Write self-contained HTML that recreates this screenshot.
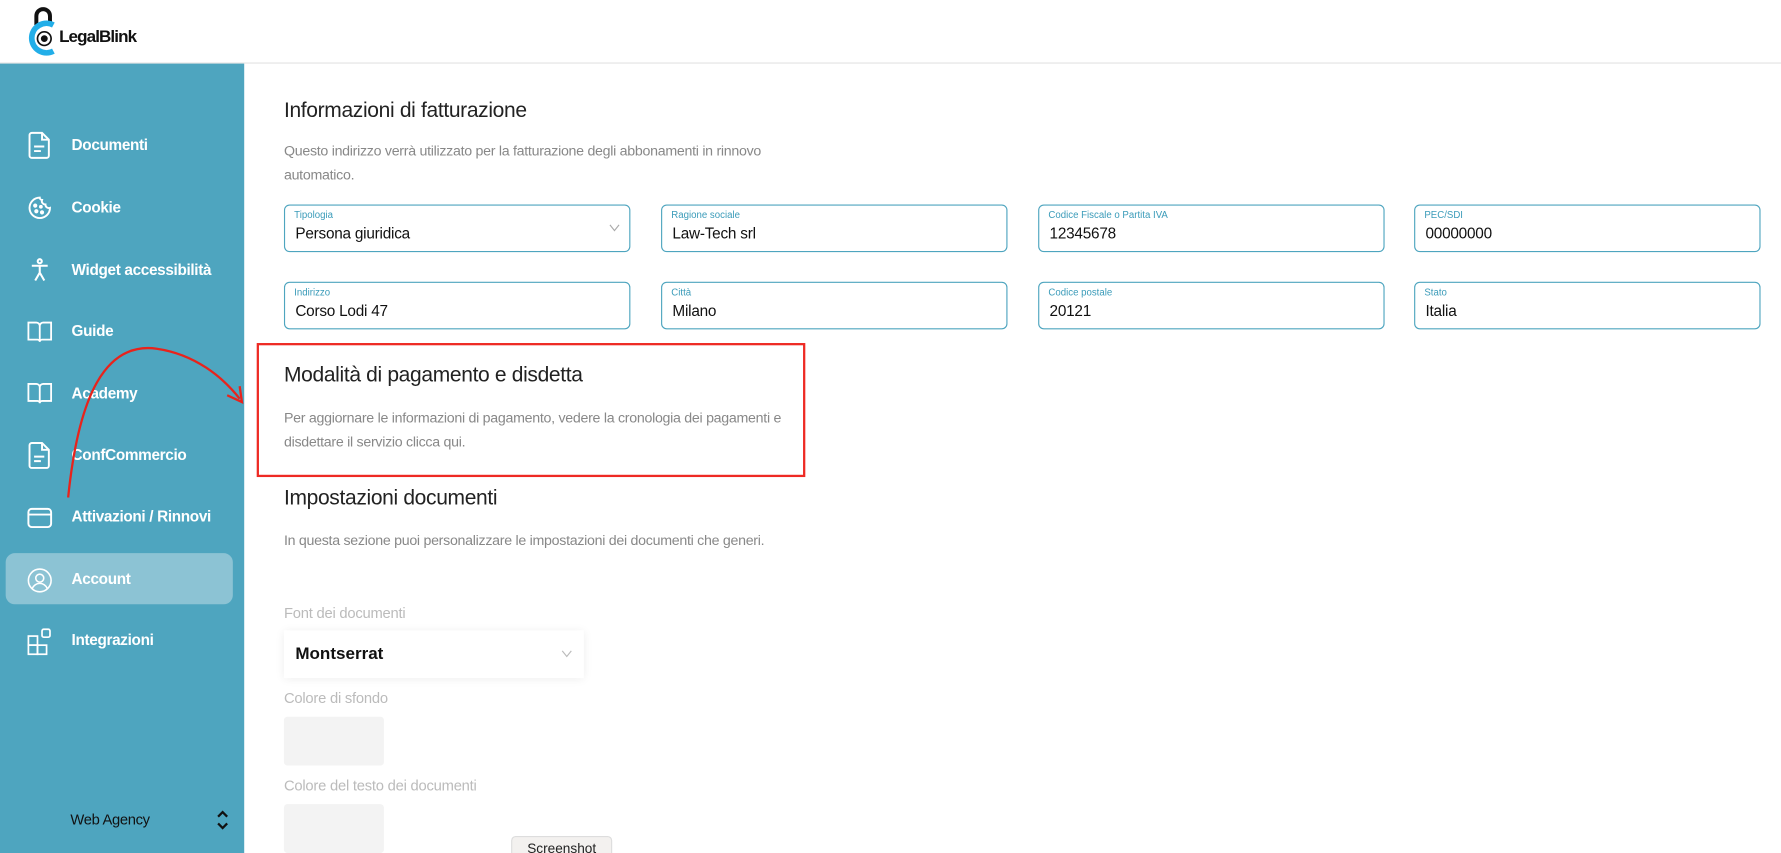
<!DOCTYPE html>
<html><head><meta charset="utf-8"><style>
*{margin:0;padding:0;box-sizing:border-box}
html,body{width:1781px;height:853px;overflow:hidden;background:#fff;font-family:"Liberation Sans",sans-serif}
#w{position:absolute;left:0;top:0;width:1568px;height:751px;transform:scale(1.13584);transform-origin:0 0;overflow:hidden}
.a{position:absolute}
.hdr{left:0;top:0;width:1568px;height:56px;border-bottom:1px solid #e3e3e3;background:#fff}
.sb{left:0;top:56px;width:215px;height:695px;background:#4ea5bf}
.it{position:absolute;left:63px;color:#fff;font-weight:bold;font-size:13.5px;letter-spacing:-0.3px}
.ic{position:absolute;left:23px}
h2{position:absolute;font-weight:normal;font-size:18.5px;color:#222;letter-spacing:-0.3px}
.d{position:absolute;font-size:12.5px;color:#888;line-height:21px;letter-spacing:-0.25px}
.f{position:absolute;height:42px;border:1px solid #4ea5bf;border-radius:5px;width:305px}
.f span{position:absolute;left:8px;top:3px;font-size:8.5px;color:#3a9bb9}
.f b{position:absolute;left:9px;top:17px;font-size:13.5px;font-weight:normal;color:#111;letter-spacing:-0.2px}
.lb{position:absolute;left:250px;font-size:13px;color:#bbb;letter-spacing:-0.2px}
.cb{position:absolute;left:250px;width:88px;height:43px;background:#f3f3f3;border-radius:3px}
</style></head><body><div id="w">
<div class="a hdr">
<svg class="a" style="left:24px;top:4px" width="30" height="46" viewBox="0 0 30 46"><path d="M8 18 V10 a6 6 0 0 1 12 0 V18" fill="none" stroke="#111" stroke-width="3.5"/><path d="M23 41 A13 13 0 1 1 23 18" fill="none" stroke="#22aee8" stroke-width="5"/><circle cx="15" cy="30" r="6" fill="#fff" stroke="#111" stroke-width="1.5"/><circle cx="15" cy="30" r="3" fill="#111"/></svg>
<div class="a" style="left:52px;top:24px;font-size:15px;font-weight:bold;color:#111;letter-spacing:-0.8px">LegalBlink</div>
</div>
<div class="a sb">
<div class="a" style="left:5px;top:431px;width:200px;height:45px;border-radius:8px;background:#8cc3d4"></div>
<svg class="ic" style="top:59px" width="24" height="26" viewBox="0 0 24 26" fill="none" stroke="#fff" stroke-width="1.7"><path d="M5 2h9l6 6v14a2 2 0 0 1-2 2H5a2 2 0 0 1-2-2V4a2 2 0 0 1 2-2z M14 2v6h6 M7 14h9 M7 18h6"/></svg>
<div class="it" style="top:64px">Documenti</div>
<svg class="ic" style="top:115px" width="24" height="24" viewBox="0 0 24 24" fill="none" stroke="#fff" stroke-width="1.7"><path d="M12 3a9 9 0 1 0 9 9 3 3 0 0 1-4-3 3 3 0 0 1-3-4 2 2 0 0 1-2-2z"/><circle cx="8" cy="10" r="1" fill="#fff"/><circle cx="9" cy="15" r="1" fill="#fff"/><circle cx="14" cy="16" r="1" fill="#fff"/><circle cx="13" cy="11" r=".8" fill="#fff"/></svg>
<div class="it" style="top:119px">Cookie</div>
<svg class="ic" style="top:170px" width="24" height="24" viewBox="0 0 24 24" fill="none" stroke="#fff" stroke-width="1.8"><circle cx="12" cy="4" r="1.8"/><path d="M5 8h14 M12 8v6 M12 14l-4 7 M12 14l4 7"/></svg>
<div class="it" style="top:174px">Widget accessibilità</div>
<svg class="ic" style="top:225px" width="24" height="22" viewBox="0 0 24 22" fill="none" stroke="#fff" stroke-width="1.6"><path d="M2 3h7a3 3 0 0 1 3 3v14a2 2 0 0 0-2-2H2z M22 3h-7a3 3 0 0 0-3 3v14a2 2 0 0 1 2-2h8z"/></svg>
<div class="it" style="top:228px">Guide</div>
<svg class="ic" style="top:279px" width="24" height="22" viewBox="0 0 24 22" fill="none" stroke="#fff" stroke-width="1.6"><path d="M2 3h7a3 3 0 0 1 3 3v14a2 2 0 0 0-2-2H2z M22 3h-7a3 3 0 0 0-3 3v14a2 2 0 0 1 2-2h8z"/></svg>
<div class="it" style="top:283px">Academy</div>
<svg class="ic" style="top:332px" width="24" height="26" viewBox="0 0 24 26" fill="none" stroke="#fff" stroke-width="1.7"><path d="M5 2h9l6 6v14a2 2 0 0 1-2 2H5a2 2 0 0 1-2-2V4a2 2 0 0 1 2-2z M14 2v6h6 M7 14h9 M7 18h6"/></svg>
<div class="it" style="top:337px">ConfCommercio</div>
<svg class="ic" style="top:389px" width="24" height="22" viewBox="0 0 24 22" fill="none" stroke="#fff" stroke-width="1.7"><rect x="2" y="3" width="20" height="16" rx="3"/><path d="M2 8h20"/></svg>
<div class="it" style="top:391px">Attivazioni / Rinnovi</div>
<svg class="ic" style="top:443px" width="24" height="24" viewBox="0 0 24 24" fill="none" stroke="#fff" stroke-width="1.4"><circle cx="12" cy="12" r="10"/><circle cx="12" cy="10" r="3.5"/><path d="M5.5 19a7 7 0 0 1 13 0"/></svg>
<div class="it" style="top:446px">Account</div>
<svg class="ic" style="top:496px" width="24" height="26" viewBox="0 0 24 26" fill="none" stroke="#fff" stroke-width="1.5"><rect x="2" y="8" width="8" height="8"/><rect x="2" y="16" width="8" height="8"/><rect x="10" y="16" width="8" height="8"/><rect x="14" y="2" width="7" height="7" rx="1.5"/></svg>
<div class="it" style="top:500px">Integrazioni</div>
<div class="a" style="left:62px;top:658px;font-size:13px;color:#111;letter-spacing:-0.3px">Web Agency</div>
<svg class="a" style="left:190px;top:656px" width="12" height="20" viewBox="0 0 12 20" fill="none" stroke="#111" stroke-width="2"><path d="M2 7l4-4 4 4 M2 13l4 4 4-4"/></svg>
</div>
<h2 style="left:250px;top:86px">Informazioni di fatturazione</h2>
<div class="d" style="left:250px;top:123px;width:470px">Questo indirizzo verrà utilizzato per la fatturazione degli abbonamenti in rinnovo automatico.</div>
<div class="f" style="left:250px;top:180px"><span>Tipologia</span><b>Persona giuridica</b><svg class="a" style="left:285px;top:16px" width="10" height="8" viewBox="0 0 10 8" fill="none" stroke="#aaa"><path d="M1 1l4 5 4-5"/></svg></div>
<div class="f" style="left:582px;top:180px"><span>Ragione sociale</span><b>Law-Tech srl</b></div>
<div class="f" style="left:914px;top:180px"><span>Codice Fiscale o Partita IVA</span><b>12345678</b></div>
<div class="f" style="left:1245px;top:180px"><span>PEC/SDI</span><b>00000000</b></div>
<div class="f" style="left:250px;top:248px"><span>Indirizzo</span><b>Corso Lodi 47</b></div>
<div class="f" style="left:582px;top:248px"><span>Città</span><b>Milano</b></div>
<div class="f" style="left:914px;top:248px"><span>Codice postale</span><b>20121</b></div>
<div class="f" style="left:1245px;top:248px"><span>Stato</span><b>Italia</b></div>
<div class="a" style="left:226px;top:302px;width:483px;height:118px;border:2px solid #ee2a24"></div>
<h2 style="left:250px;top:319px">Modalità di pagamento e disdetta</h2>
<div class="d" style="left:250px;top:358px;width:450px">Per aggiornare le informazioni di pagamento, vedere la cronologia dei pagamenti e disdettare il servizio clicca qui.</div>
<h2 style="left:250px;top:427px">Impostazioni documenti</h2>
<div class="d" style="left:250px;top:466px">In questa sezione puoi personalizzare le impostazioni dei documenti che generi.</div>
<div class="lb" style="top:532px">Font dei documenti</div>
<div class="a" style="left:250px;top:555px;width:264px;height:42px;background:#fff;box-shadow:0 1px 8px rgba(0,0,0,0.08)"><div class="a" style="left:10px;top:12px;font-size:15px;font-weight:bold;color:#111">Montserrat</div><svg class="a" style="left:244px;top:17px" width="10" height="8" viewBox="0 0 10 8" fill="none" stroke="#bbb"><path d="M1 1l4 5 4-5"/></svg></div>
<div class="lb" style="top:607px">Colore di sfondo</div>
<div class="cb" style="top:631px"></div>
<div class="lb" style="top:684px">Colore del testo dei documenti</div>
<div class="cb" style="top:708px"></div>
<div class="a" style="left:450px;top:736px;width:89px;height:20px;background:#f3f1ef;border:1px solid #ddd;border-radius:4px;font-size:12px;color:#222;text-align:center;padding-top:3px">Screenshot</div>
<svg class="a" style="left:0;top:0" width="260" height="460" viewBox="0 0 260 460" fill="none"><path d="M60 438 C 68 360, 88 300, 138 307 C 172 312, 196 332, 211 351" stroke="#e8231c" stroke-width="2"/><path d="M200 348 L213 354 L211 340" stroke="#e8231c" stroke-width="2"/></svg>
</div></body></html>
